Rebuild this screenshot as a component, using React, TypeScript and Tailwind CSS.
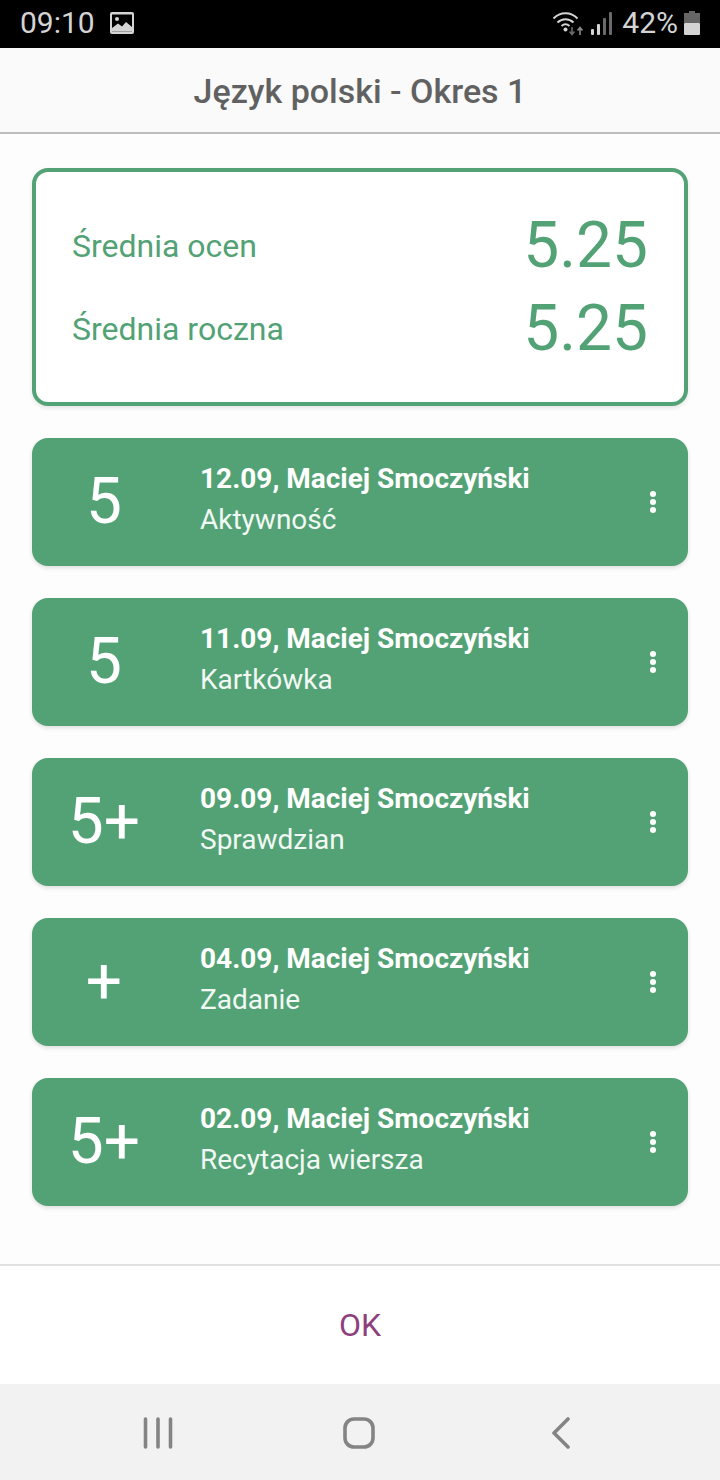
import React from 'react';

const grades = [
  { grade: '5', head: '12.09, Maciej Smoczyński', label: 'Aktywność' },
  { grade: '5', head: '11.09, Maciej Smoczyński', label: 'Kartkówka' },
  { grade: '5+', head: '09.09, Maciej Smoczyński', label: 'Sprawdzian' },
  { grade: '+', head: '04.09, Maciej Smoczyński', label: 'Zadanie' },
  { grade: '5+', head: '02.09, Maciej Smoczyński', label: 'Recytacja wiersza' },
];

function StatusBar() {
  return (
    <div className="h-12 bg-black flex items-center justify-between pl-5 pr-5 pb-[2px] font-['Roboto',sans-serif] text-[#d4d4d4]">
      <div className="flex items-center gap-[15px]">
        <span className="text-[30px] leading-none">09:10</span>
        <svg width="24" height="22" viewBox="0 0 24 22">
          <rect x="0" y="0" width="24" height="22" rx="2" fill="#d4d4d4" />
          <rect x="2" y="2.5" width="20" height="17" fill="#000" />
          <circle cx="7" cy="7" r="2" fill="#d4d4d4" />
          <path d="M2 19.5 L2 16 L8 11.5 L12 14.5 L16 10 L22 15 L22 19.5 Z" fill="#d4d4d4" />
        </svg>
      </div>
      <div className="flex items-center">
        <svg width="36" height="26" viewBox="0 0 36 26" className="mr-[2px]">
          <path d="M1.5 8.5 C8 1.5 19 1.5 25.5 8.5" fill="none" stroke="#d4d4d4" strokeWidth="2" />
          <path d="M5.5 12.5 C10 8 17 8 21.5 12.5" fill="none" stroke="#d4d4d4" strokeWidth="2" />
          <path d="M9.5 16 C12 13.8 15 13.8 17.5 16" fill="none" stroke="#d4d4d4" strokeWidth="2" />
          <circle cx="13.5" cy="19.5" r="2" fill="#d4d4d4" />
          <path d="M20 17 V24 M17.5 21.5 L20 24.5 L22.5 21.5" fill="none" stroke="#6b6b6b" strokeWidth="1.6" />
          <path d="M28 25 V18 M25.5 20.5 L28 17.5 L30.5 20.5" fill="none" stroke="#8a8a8a" strokeWidth="1.6" />
        </svg>
        <svg width="24" height="26" viewBox="0 0 24 26" className="mr-[8px]">
          <rect x="1" y="19" width="3" height="6" rx="1" fill="#d4d4d4" />
          <rect x="7" y="14" width="3" height="11" rx="1" fill="#d4d4d4" />
          <rect x="13" y="8" width="3" height="17" rx="1" fill="#6a6a6a" />
          <rect x="19" y="2" width="3" height="23" rx="1" fill="#6a6a6a" />
        </svg>
        <span className="text-[30px] leading-none">42%</span>
        <svg width="16" height="24" viewBox="0 0 16 24" className="ml-[6px]">
          <path d="M5 0 H11 V2 H16 V12 H0 V2 H5 Z" fill="#666" />
          <rect x="0" y="12" width="16" height="12" rx="1" fill="#d4d4d4" />
        </svg>
      </div>
    </div>
  );
}

function GradeCard({ grade, head, label }: { grade: string; head: string; label: string }) {
  return (
    <div className="h-32 bg-[#53a275] rounded-2xl flex items-center text-white shadow-[0_2px_4px_rgba(0,0,0,0.12)]">
      <div className="w-[144px] text-center text-[64px] leading-none">{grade}</div>
      <div className="ml-[24px] flex-1 pb-[5px]">
        <div className="text-[28px] leading-10 font-bold">{head}</div>
        <div className="text-[28px] leading-[41px] text-[#f2f8f4]">{label}</div>
      </div>
      <div className="mr-8 flex flex-col gap-[2px]">
        <span className="w-[6px] h-[6px] rounded-full bg-white" />
        <span className="w-[6px] h-[6px] rounded-full bg-white" />
        <span className="w-[6px] h-[6px] rounded-full bg-white" />
      </div>
    </div>
  );
}

export default function App() {
  return (
    <div className="w-[720px] h-[1480px] bg-[#fdfdfd] flex flex-col font-['Roboto',sans-serif] overflow-hidden">
      <StatusBar />

      {/* Header */}
      <div className="h-[86px] pt-[2px] bg-[#fafafa] border-b-2 border-[#bdbdbd] flex items-center justify-center">
        <span className="text-[34px] font-medium text-[#616161]">Język polski - Okres 1</span>
      </div>

      {/* Content */}
      <div className="flex-1 px-8 pt-[34px] flex flex-col gap-8">
        <div className="h-[238px] border-4 border-[#53a275] rounded-2xl bg-white px-9 flex flex-col justify-center gap-[13px] text-[#53a275] shadow-[0_2px_4px_rgba(0,0,0,0.1)]">
          <div className="flex items-center justify-between h-[70px]">
            <span className="text-[32px]">Średnia ocen</span>
            <span className="text-[64px] leading-none">5.25</span>
          </div>
          <div className="flex items-center justify-between h-[70px]">
            <span className="text-[32px]">Średnia roczna</span>
            <span className="text-[64px] leading-none">5.25</span>
          </div>
        </div>
        {grades.map((g) => (
          <GradeCard key={g.head} grade={g.grade} head={g.head} label={g.label} />
        ))}
      </div>

      {/* Footer */}
      <div className="h-[120px] bg-white border-t-2 border-[#e0e0e0] flex items-center justify-center">
        <span className="text-[32px] text-[#8e3f7e]">OK</span>
      </div>

      {/* Nav bar */}
      <div className="h-24 bg-[#f2f2f2] flex items-center pt-[2px]">
        <svg width="30" height="32" viewBox="0 0 30 32" className="ml-[143px]">
          <path d="M2.5 2 V30 M15 2 V30 M27.5 2 V30" stroke="#848484" strokeWidth="3.6" strokeLinecap="round" />
        </svg>
        <svg width="32" height="32" viewBox="0 0 32 32" className="ml-[170px]">
          <rect x="2" y="2" width="28" height="28" rx="9" fill="none" stroke="#848484" strokeWidth="3.6" />
        </svg>
        <svg width="20" height="32" viewBox="0 0 20 32" className="ml-[176px]">
          <path d="M17 2 L3 16 L17 30" fill="none" stroke="#848484" strokeWidth="3.6" strokeLinecap="round" strokeLinejoin="round" />
        </svg>
      </div>
    </div>
  );
}
